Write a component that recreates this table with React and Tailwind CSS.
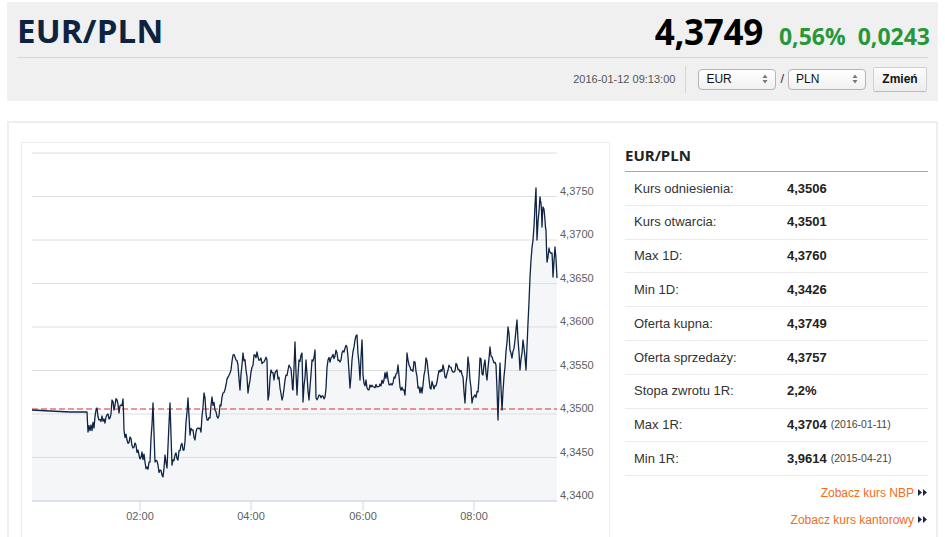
import React from 'react';

const stats = [
  ['Kurs odniesienia:', '4,3506'],
  ['Kurs otwarcia:', '4,3501'],
  ['Max 1D:', '4,3760'],
  ['Min 1D:', '4,3426'],
  ['Oferta kupna:', '4,3749'],
  ['Oferta sprzedaży:', '4,3757'],
  ['Stopa zwrotu 1R:', '2,2%'],
  ['Max 1R:', '4,3704', '(2016-01-11)'],
  ['Min 1R:', '3,9614', '(2015-04-21)'],
];

// key points of the intraday line, in page pixels
const keys = [
  [32,410],[50,411],[70,412],[87,412],[88,432],[91,425],[94,428],[97,408],[99,420],[102,416],[105,423],[108,414],[110,418],[112,400],[114,410],[117,400],[119,413],[121,405],[123,399],[124,430],[127,440],[130,437],[133,448],[136,445],[139,455],[142,452],[145,462],[147,467],[150,462],[153,403],[155,462],[158,465],[160,470],[163,477],[165,455],[167,468],[170,403],[172,465],[175,455],[178,460],[181,445],[184,450],[188,398],[190,435],[192,430],[195,440],[198,428],[201,432],[204,393],[207,420],[210,418],[212,397],[215,410],[218,418],[220,405],[223,393],[226,385],[230,373],[233,355],[236,360],[238,365],[240,390],[243,353],[246,370],[248,393],[251,372],[255,355],[258,357],[261,358],[264,362],[267,360],[268,400],[271,370],[274,380],[277,370],[280,388],[282,400],[285,380],[288,370],[290,367],[292,380],[293,390],[295,342],[297,395],[299,360],[302,353],[303,402],[306,360],[309,400],[312,360],[315,350],[316,398],[319,395],[322,396],[325,397],[328,360],[330,362],[332,357],[335,356],[337,353],[340,362],[344,352],[347,347],[350,388],[352,360],[355,340],[357,335],[360,380],[362,340],[363,375],[367,388],[370,385],[374,387],[377,387],[380,384],[384,380],[387,372],[390,385],[393,383],[395,378],[398,365],[400,387],[403,390],[405,395],[407,353],[409,365],[412,370],[415,362],[418,388],[422,393],[424,375],[426,358],[428,370],[430,388],[433,385],[437,382],[440,372],[443,365],[446,378],[450,367],[453,372],[457,365],[460,372],[463,377],[465,403],[468,357],[470,380],[472,403],[475,395],[478,392],[480,358],[483,375],[485,360],[487,380],[490,347],[493,360],[496,365],[498,420],[500,363],[502,410],[505,367],[508,327],[510,350],[512,358],[515,340],[517,320],[520,370],[523,340],[526,370],[528,323],[530,277],[533,240],[536,188],[537,240],[540,197],[541,203],[542,227],[543,207],[545,220],[546,230],[547,262],[549,248],[550,252],[552,253],[553,277],[555,247],[557,278],
];

function buildLine() {
  let s = 12345;
  const rnd = () => {
    s = (s * 16807) % 2147483647;
    return (s - 1) / 2147483646;
  };
  const pts = [];
  for (let i = 0; i < keys.length; i++) {
    const [x, y] = keys[i];
    pts.push([x, y]);
    const next = keys[i + 1];
    if (!next || x < 88) continue;
    const dx = next[0] - x;
    const steps = Math.max(2, Math.floor(dx / 0.9));
    for (let k = 1; k < steps; k++) {
      const t = k / steps;
      pts.push([x + dx * t, y + (next[1] - y) * t + (rnd() - 0.5) * 10]);
    }
  }
  return pts;
}

const yOf = (v) => 501 - ((v - 4.34) / 0.005) * 43.5;
const grid = [4.38, 4.375, 4.37, 4.365, 4.36, 4.355, 4.35, 4.345, 4.34];
const ticks = [[140, '02:00'], [251, '04:00'], [363, '06:00'], [474, '08:00']];

function Chart() {
  const pts = buildLine();
  const line = pts.map(([x, y], i) => `${i ? 'L' : 'M'}${x.toFixed(1)} ${y.toFixed(1)}`).join(' ');
  const area = `${line} L557 501 L32 501 Z`;
  return (
    <div className="w-[589px] h-[400px] border border-[#ececec] shrink-0">
      <svg width="587" height="398" viewBox="22 143 587 398" className="block">
        <path d={area} fill="#f5f6f8" />
        {grid.map((v) => (
          <line key={v} x1="32" x2="557" y1={yOf(v)} y2={yOf(v)} stroke="#dedede" strokeWidth="1" />
        ))}
        {grid.slice(1).map((v) => (
          <text key={v} x="560" y={yOf(v) - 2} fontSize="11" fill="#606060" fontFamily="Liberation Sans, Arial, sans-serif">
            {v.toFixed(4).replace('.', ',')}
          </text>
        ))}
        <line x1="32" x2="557" y1="501" y2="501" stroke="#ccd6eb" />
        {ticks.map(([x, t]) => (
          <g key={t}>
            <line x1={x} x2={x} y1="501" y2="511" stroke="#ccd6eb" />
            <text x={x} y="520" textAnchor="middle" fontSize="11" fill="#606060" fontFamily="Liberation Sans, Arial, sans-serif">
              {t}
            </text>
          </g>
        ))}
        <line x1="32" x2="557" y1="409" y2="409" stroke="#d93030" strokeWidth="1.2" strokeDasharray="6 3" />
        <path d={line} fill="none" stroke="#0f2444" strokeWidth="1.3" strokeLinejoin="round" />
      </svg>
    </div>
  );
}

const UpDown = () => (
  <svg width="6" height="10" viewBox="0 0 6 10" className="shrink-0">
    <path d="M3 0.5 L5.5 4 H0.5 Z M3 9.5 L5.5 6 H0.5 Z" fill="#777" />
  </svg>
);

const Select = ({ value }) => (
  <div className="w-[78px] h-[21px] flex items-center justify-between pl-[7px] pr-[7px] border border-[#b4b4b4] rounded-[4px] bg-gradient-to-b from-white to-[#f1f1f1] text-[12px] text-[#111] leading-none">
    <span>{value}</span>
    <UpDown />
  </div>
);

const Arrows = () => (
  <svg width="9" height="7" viewBox="0 0 9 7" className="ml-[4px]">
    <path d="M0 0 L4 3.5 L0 7 Z M5 0 L9 3.5 L5 7 Z" fill="#1b2a44" />
  </svg>
);

export default function App() {
  return (
    <div className="w-[945px] h-[537px] overflow-hidden bg-white font-['Liberation_Sans',Arial,sans-serif] text-[#333]">
      <div className="mx-[7px] mt-[2px] h-[99px] bg-[#f0f0f0] px-[10px]">
        <div className="h-[56px] flex items-center justify-between border-b border-[#d6d6d6] font-['Open_Sans',sans-serif]">
          <h1 className="text-[33px] font-bold text-[#0d2340] tracking-[0.2px] leading-none pt-[2px]">EUR/PLN</h1>
          <div className="flex items-baseline pt-[4px]">
            <span className="text-[35px] font-bold text-black leading-none tracking-[-0.3px]">4,3749</span>
            <span className="ml-[16px] text-[23px] font-bold text-[#27973a] leading-none">0,56%</span>
            <span className="ml-[12px] text-[23px] font-bold text-[#27973a] leading-none -mr-[2px]">0,0243</span>
          </div>
        </div>
        <div className="h-[42px] flex items-center justify-end">
          <span className="text-[11px] text-[#555] mr-[10px]">2016-01-12 09:13:00</span>
          <div className="w-px h-[27px] bg-[#d6d6d6] mr-[12px]" />
          <Select value="EUR" />
          <span className="mx-[4px] text-[13px] text-[#333]">/</span>
          <Select value="PLN" />
          <button className="ml-[7px] mr-[1px] w-[54px] h-[25px] bg-gradient-to-b from-[#fcfcfc] to-[#ececec] border border-[#d0d0d0] border-b-[#bcbcbc] rounded-[2px] text-[12px] font-bold text-[#111]">
            Zmień
          </button>
        </div>
      </div>

      <div className="mx-[7px] mt-[20px] h-[430px] border-2 border-[#eeeeee] pl-[12px] pt-[19px] flex">
        <Chart />
        <div className="ml-[15px] w-[303px]">
          <div className="pt-[4px] pb-[7px] leading-[18px] border-b border-[#a8a8a8] text-[15px] font-bold text-[#222] font-['Open_Sans',sans-serif]">
            EUR/PLN
          </div>
          {stats.map(([label, value, date]) => (
            <div key={label} className="h-[33.8px] border-b border-[#ebebeb] flex items-center text-[13px]">
              <span className="w-[162px] pl-[9px] text-[#333]">{label}</span>
              <span className="font-bold text-[#222]">{value}</span>
              {date && <span className="ml-[4px] text-[10.5px] text-[#444]">{date}</span>}
            </div>
          ))}
          <div className="mt-[3px] flex flex-col items-end text-[12px] text-[#f26c22]">
            <a className="h-[27px] flex items-center pr-[1px]">Zobacz kurs NBP<Arrows /></a>
            <a className="h-[27px] flex items-center pr-[1px]">Zobacz kurs kantorowy<Arrows /></a>
          </div>
        </div>
      </div>
    </div>
  );
}
